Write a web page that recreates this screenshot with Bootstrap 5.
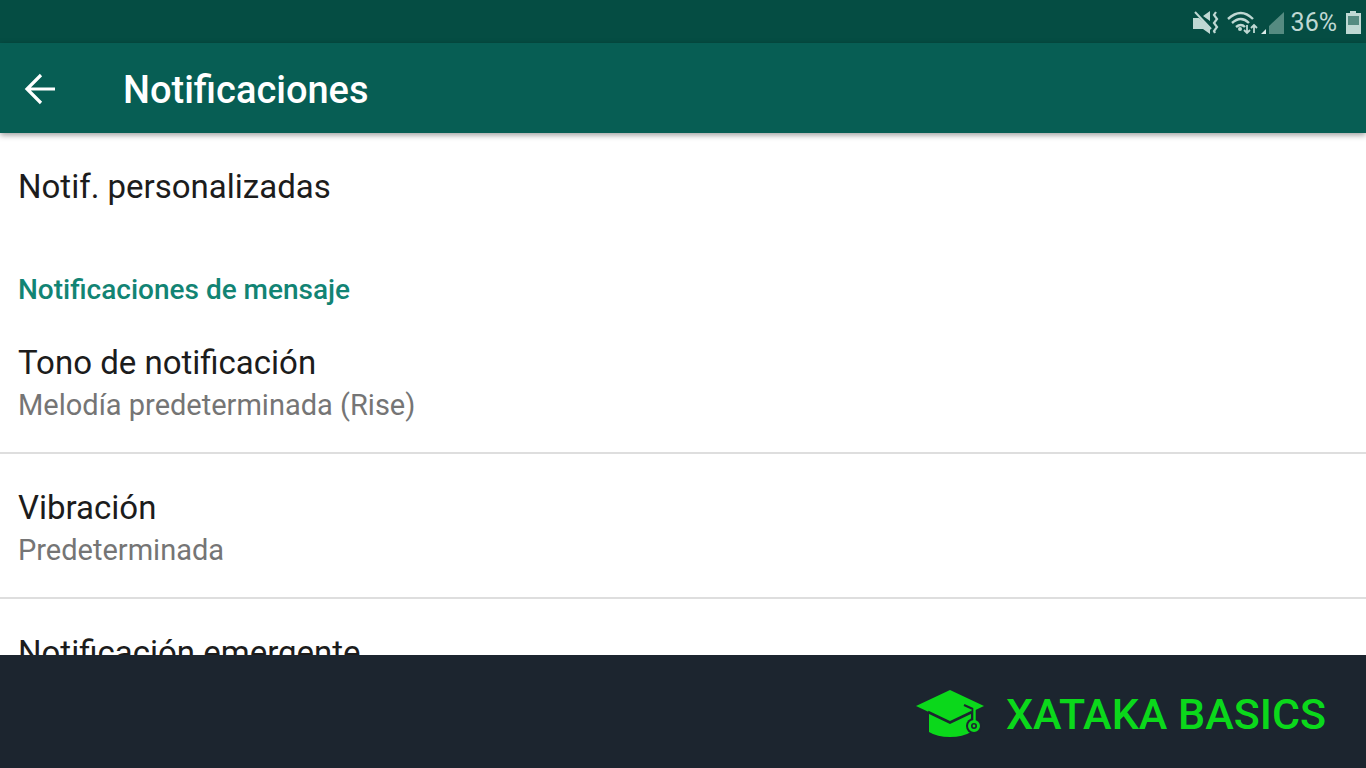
<!DOCTYPE html>
<html lang="es">
<head>
<meta charset="utf-8">
<meta name="viewport" content="width=device-width, initial-scale=1">
<title>Notificaciones</title>
<link href="https://cdn.jsdelivr.net/npm/bootstrap@5.3.0/dist/css/bootstrap.min.css" rel="stylesheet">
<style>
  body { font-family: Roboto, "Liberation Sans", sans-serif; color: #1c1c1c; background: #fff; }
  .status-bar { height: 43px; background: #054d43; color: #bfd8d3; font-size: 25px; line-height: 40px; padding: 3px 4px 0 0; }
  .app-bar { height: 90px; background: #075e54; color: #fff; padding: 2px 24px 0; gap: 66px; box-shadow: 0 2px 6px rgba(0, 0, 0, .4); z-index: 1; }
  .app-bar h1 { font-size: 38px; line-height: 44px; font-weight: 500; padding-top: 2px; }
  .back-btn { width: 33px; height: 32px; }
  .settings { min-height: 0; }
  .setting { display: block; padding: 32px 18px 27px; color: inherit; text-decoration: none; }
  .setting-name { display: block; font-size: 33px; line-height: 44px; }
  .setting-value { display: block; font-size: 29px; line-height: 40px; color: #757575; }
  .ruled { border-bottom: 2px solid #dedede; }
  .group-title { font-size: 28px; line-height: 38px; font-weight: 500; color: #128474; padding: 35px 18px 0; }
  .brand-bar { height: 113px; background: #1c252f; padding: 4px 40px 0 0; }
  .brand-link { color: #0bd81b; gap: 22px; font-size: 43px; line-height: 56px; font-weight: 500; }
</style>
</head>
<body>
<div class="d-flex flex-column vh-100 overflow-hidden">
  <div class="status-bar d-flex justify-content-end align-items-center flex-shrink-0">
    <svg width="100" height="30" viewBox="1192 7 100 30" fill="none" stroke="#bfd8d3" aria-hidden="true">
      <path d="M1194 17h6l11 9v7l-7-5h-10z M1204 15l7-5v10z" fill="#bfd8d3" stroke="none"/>
      <path d="M1196 11l16 17" stroke-width="2"/>
      <path d="M1217 11l-2 3 3 4-3 4 3 4-3 4 1 2" stroke-width="2.2"/>
      <path d="M1229 18q13-12 25 0M1233 22q9-8 17 0M1237 26q5-4 9 0" stroke-width="2.4"/>
      <circle cx="1241" cy="28" r="2" fill="#bfd8d3" stroke="none"/>
      <path d="M1248 24v8m-3-3l3 3 3-3M1255 32v-8m-3 3l3-3 3 3" stroke-width="1.8"/>
      <path d="M1267 28v5h-5z" fill="#dcebe8" stroke="none"/>
      <path d="M1285 11v22h-15v-8z" fill="#558b81" stroke="none"/>
    </svg>
    <span>36%</span>
    <svg class="ms-2" width="17" height="24" viewBox="0 0 17 24" aria-hidden="true">
      <path d="M5 0h6v2h5v21H1V2h4z" fill="#bfd8d3"/><path d="M3 5h11v9H3z" fill="#558b81"/>
    </svg>
  </div>
  <header class="app-bar d-flex align-items-center position-relative flex-shrink-0">
    <button type="button" class="back-btn btn p-0 border-0 d-flex" aria-label="Atrás">
      <svg width="33" height="32" viewBox="0 0 33 32" fill="none" stroke="#fff" stroke-width="3.2" aria-hidden="true"><path d="M31 16H4M17 2L3 16l14 14"/></svg>
    </button>
    <h1 class="m-0">Notificaciones</h1>
  </header>
  <main class="settings flex-grow-1 overflow-hidden">
    <a href="#" class="setting"><span class="setting-name">Notif. personalizadas</span></a>
    <h2 class="group-title m-0">Notificaciones de mensaje</h2>
    <a href="#" class="setting ruled"><span class="setting-name">Tono de notificación</span><span class="setting-value">Melodía predeterminada (Rise)</span></a>
    <a href="#" class="setting ruled"><span class="setting-name">Vibración</span><span class="setting-value">Predeterminada</span></a>
    <a href="#" class="setting"><span class="setting-name">Notificación emergente</span></a>
  </main>
  <footer class="brand-bar d-flex align-items-center justify-content-end flex-shrink-0">
    <a href="#" class="brand-link d-flex align-items-center text-decoration-none">
      <svg width="68" height="48" viewBox="0 0 68 48" aria-hidden="true">
        <path d="M13 20h42v22q-8 5-21 5t-21-5z" fill="#0bd81b"/>
        <path d="M34 0l34 16-34 16L0 16z" fill="#0bd81b"/>
        <path d="M12 22l22 10.5 22-10.5" stroke="#1c252f" stroke-width="2.5" fill="none"/>
        <circle cx="58" cy="36" r="8" fill="#1c252f"/>
        <path d="M58 20v12" stroke="#1c252f" stroke-width="5"/>
        <path d="M48 15l10 4.5" stroke="#1c252f" stroke-width="2" fill="none"/>
        <path d="M58.5 18v13" stroke="#0bd81b" stroke-width="2.4"/>
        <circle cx="58" cy="36" r="4.5" fill="none" stroke="#0bd81b" stroke-width="3"/>
        <circle cx="58" cy="36" r="1.4" fill="#0bd81b"/>
      </svg>
      <span>XATAKA BASICS</span>
    </a>
  </footer>
</div>
<script src="https://cdn.jsdelivr.net/npm/bootstrap@5.3.0/dist/js/bootstrap.bundle.min.js"></script>
</body>
</html>
